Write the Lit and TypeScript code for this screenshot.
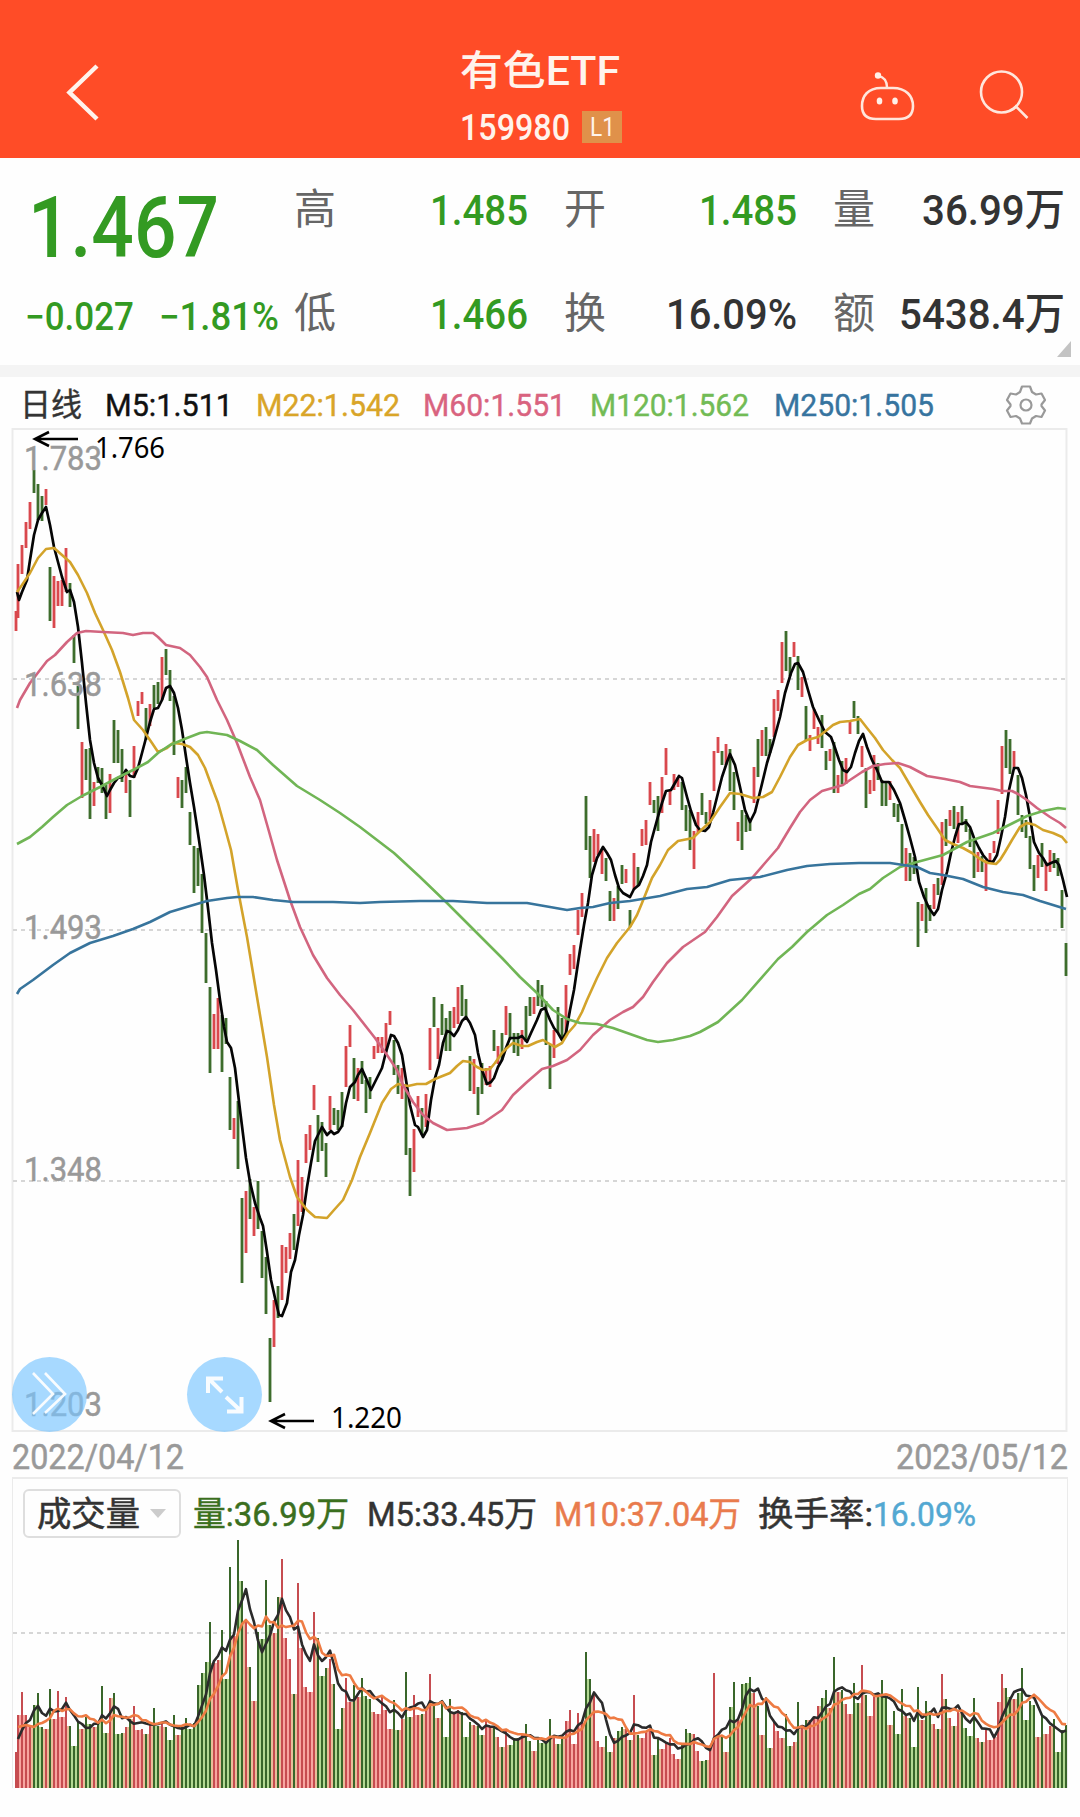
import { LitElement, html, svg, css } from 'lit';
import { customElement, property, state, query } from 'lit/decorators.js';
import { styleMap } from 'lit/directives/style-map.js';

interface Bar { x: number; up: boolean; top: number; bottom: number; vol: number }

const X0 = 18;
const STEP = 4;
const VOL_BASE = 1788;

/* Daily ranges: direction (r = up, g = down), high edge, low edge. */
const RANGES = `r564-618 r545-574 r522-548 r502-529 g470-493 g484-520 g496-521 r489-505 g567-621 r576-628
r581-606 r580-606 r548-592 g583-607 g635-663 g686-729 r742-798 g749-780 g748-819 r782-806
g767-783 g768-793 g785-819 r774-813 g720-763 g730-763 g749-782 r770-793 g780-817 r746-778
r701-716 r692-704 g708-740 r704-726 g685-708 g682-704 r657-700 g649-675 g670-701 g696-755
r777-798 g780-808 g767-793 g812-845 g846-893 g848-886 g874-933 g933-983 g987-1073 r1014-1049
r998-1049 g1015-1072 g1018-1044 g1077-1130 r1118-1139 g1101-1169 g1198-1283 r1191-1253 g1179-1219 r1207-1236
g1181-1229 g1231-1278 g1257-1314 g1338-1402 r1300-1347 g1286-1318 r1245-1300 r1247-1273 r1233-1259 g1214-1250
r1160-1226 r1177-1212 r1134-1163 r1125-1150 r1085-1110 g1115-1162 g1122-1151 g1143-1177 r1096-1130 g1108-1125
g1110-1130 g1092-1127 r1046-1087 r1025-1047 g1058-1099 r1068-1101 g1061-1084 g1080-1113 g1077-1099 r1046-1059
r1037-1053 r1037-1053 r1023-1054 r1011-1025 g1040-1075 g1065-1094 r1068-1099 g1087-1155 g1148-1196 r1129-1172
r1096-1117 g1108-1135 r1094-1127 r1028-1070 g997-1027 r1028-1059 g1004-1035 g1018-1051 g1011-1051 r1007-1028
r987-1024 g985-1016 g999-1020 g1056-1091 r1059-1094 g1087-1115 g1063-1094 r1068-1085 r1066-1087 g1030-1051
r1046-1064 g1033-1060 r1006-1035 g1013-1040 g1033-1053 g1033-1056 r1030-1049 g1006-1042 g997-1016 r997-1014
g980-1006 g985-1007 g1001-1045 g1045-1089 r1030-1058 g1007-1033 g1018-1040 r985-1033 r954-975 r945-969
r910-935 r893-917 g796-850 g836-878 r829-862 r834-855 r850-874 g858-881 g891-921 r898-921
g886-909 g865-884 r869-883 g910-927 r853-890 g867-886 r829-846 r820-845 r782-805 g800-813
g796-831 r777-813 r748-775 r790-805 r774-790 r777-787 g782-810 g805-831 g810-850 r831-869
r812-833 g793-815 g812-824 r800-821 r751-791 r737-753 g751-765 r744-765 g749-791 g772-810
r822-841 g810-850 g815-832 g819-831 r767-803 g739-777 r730-756 g727-756 g739-753 r699-737
r690-711 r642-683 g631-671 g657-676 r642-657 g656-690 r677-697 g706-741 r735-751 r709-729
r727-744 g715-748 g751-770 r749-761 g742-793 r775-793 g761-784 r758-784 r720-734 g701-718
g716-734 r746-767 g768-808 r780-794 r755-791 g763-780 g780-806 g782-806 r781-800 g803-817
g804-822 g824-864 r848-881 g853-881 g857-874 g902-947 r904-921 g888-933 g905-921 r884-909
g878-895 r822-885 g819-846 r810-826 g806-829 r812-843 g806-823 g819-832 g829-847 g840-878
r852-872 g856-872 r860-891 r853-862 r841-853 r800-834 r746-794 g730-768 g739-774 r751-768
g775-815 g815-832 g820-838 g836-869 g865-891 r855-878 g843-867 r862-891 r850-872 g853-868
g858-876 g890-928 g943-976`;

/* Top edge of each volume bar, same order as the daily ranges. */
const VOLUMES = `1715 1692 1715 1725 1705 1693 1727 1729 1689 1719 1691 1717 1697 1726 1746 1722 1729 1717 1724 1727
1722 1686 1733 1698 1693 1734 1733 1727 1719 1706 1730 1729 1734 1723 1708 1726 1723 1727 1740 1715
1735 1727 1718 1729 1723 1685 1673 1662 1622 1663 1660 1630 1679 1567 1636 1540 1581 1622 1667 1701
1632 1639 1580 1625 1633 1597 1559 1638 1659 1694 1583 1648 1687 1692 1612 1638 1676 1668 1659 1684
1729 1708 1678 1702 1685 1697 1678 1696 1699 1712 1714 1696 1710 1729 1700 1730 1719 1672 1717 1695
1715 1714 1708 1674 1706 1718 1700 1737 1699 1712 1710 1712 1737 1722 1725 1726 1735 1720 1727 1726
1737 1747 1730 1745 1738 1738 1735 1724 1741 1751 1739 1743 1741 1719 1737 1744 1738 1721 1710 1744
1713 1723 1652 1679 1695 1741 1747 1736 1752 1738 1731 1727 1729 1740 1695 1735 1738 1731 1729 1755
1737 1749 1743 1738 1754 1759 1744 1729 1733 1734 1751 1761 1760 1745 1673 1735 1735 1752 1707 1682
1720 1684 1683 1677 1693 1706 1735 1697 1748 1722 1731 1738 1714 1746 1742 1702 1726 1720 1720 1718
1706 1698 1690 1708 1657 1692 1690 1704 1714 1683 1703 1665 1695 1716 1695 1696 1680 1696 1725 1711
1734 1689 1716 1718 1747 1687 1720 1701 1711 1724 1729 1674 1699 1718 1726 1710 1713 1728 1736 1698
1738 1742 1730 1740 1737 1702 1674 1688 1697 1699 1693 1668 1720 1701 1705 1737 1715 1734 1726 1719
1752 1730 1725`.split(/\s+/).map(Number);

const BARS: Bar[] = RANGES.split(/\s+/).map((r, i) => {
  const [top, bottom] = r.slice(1).split('-').map(Number);
  return { x: X0 + i * STEP, up: r[0] === 'r', top, bottom, vol: VOLUMES[i] };
});
BARS.unshift({ x: 16, up: true, top: 611, bottom: 631, vol: 1752 });

const volumeAverage = (n: number, lead: number[]) =>
  VOLUMES.map((_, i) => {
    const y = i < lead.length ? lead[i] : VOLUMES.slice(i - n + 1, i + 1).reduce((a, b) => a + b, 0) / n;
    return `${X0 + i * STEP},${y.toFixed(1)}`;
  }).join(' ');

const VOL_M5 = volumeAverage(5, [1739, 1730, 1723, 1720]);
const VOL_M10 = volumeAverage(10, [1727, 1726, 1725, 1726, 1727, 1724, 1723, 1721, 1718]);

const M5 = `17,592 19,600 22,592 27,580 30,560 34,535 38,520 42,513 46,507 50,525 54,547 58,562 62,577 67,592 70,590 74,602 78,627 82,663 86,703 90,740 94,763 98,778 102,785 107,796 110,790 114,783 118,778 122,777 126,770 130,776 134,777 138,768 142,753 146,738 150,722 154,709 158,708 162,700 166,688 170,686 174,693 178,708 182,730 186,757 190,783 194,807 199,840 204,875 208,908 212,943 216,970 220,1000 224,1027 227,1042 231,1048 235,1068 240,1110 246,1158 250,1182 255,1203 260,1218 263,1226 267,1252 271,1280 275,1298 279,1315 282,1316 287,1303 291,1272 295,1260 299,1235 303,1215 307,1187 311,1163 315,1141 319,1133 322,1127 327,1135 331,1131 334,1134 338,1132 342,1126 346,1103 350,1087 355,1082 358,1075 362,1069 366,1078 371,1090 375,1082 382,1068 386,1052 391,1035 394,1036 398,1043 402,1055 406,1080 410,1105 415,1125 418,1127 423,1137 427,1130 431,1100 435,1078 439,1065 443,1043 447,1031 450,1032 454,1036 458,1030 462,1021 466,1017 470,1023 475,1035 478,1053 482,1070 487,1084 491,1082 494,1078 498,1067 502,1060 506,1048 510,1038 514,1038 518,1038 522,1036 527,1042 531,1033 537,1020 541,1010 545,1008 550,1020 554,1028 558,1033 562,1040 566,1033 570,1010 574,990 578,963 580,950 584,925 588,903 592,875 597,858 603,847 607,853 611,860 615,875 619,888 623,893 630,897 634,889 639,885 643,876 647,865 651,842 657,820 662,803 666,791 671,790 675,783 679,776 682,778 687,797 691,811 696,825 700,830 705,831 709,827 713,813 717,797 722,777 727,762 730,754 735,765 740,787 745,810 750,822 755,812 760,792 767,763 773,743 780,717 785,693 791,673 795,664 798,663 803,672 808,690 813,707 819,720 825,732 831,737 835,748 839,760 843,770 847,772 851,767 855,753 859,741 863,734 867,747 872,760 877,770 882,782 889,782 894,790 900,803 905,820 910,838 915,857 919,882 924,897 929,908 934,915 938,909 942,890 947,872 951,853 955,837 959,824 962,824 966,822 970,827 974,838 979,848 983,855 988,861 993,862 997,855 1001,837 1005,817 1009,790 1014,768 1018,768 1022,778 1026,795 1030,817 1034,842 1039,853 1043,858 1047,865 1051,863 1056,861 1059,865 1063,880 1067,897`;
const M22 = `17,592 22,585 30,573 38,558 46,549 54,548 62,555 70,562 78,575 87,593 95,613 103,630 112,650 120,672 128,698 134,720 143,730 152,743 158,752 167,748 173,743 182,744 190,747 198,755 205,768 212,787 218,803 225,828 231,850 238,890 247,937 257,997 267,1057 274,1105 280,1140 290,1177 297,1197 307,1210 315,1217 327,1218 334,1210 343,1200 352,1180 360,1157 370,1133 382,1103 391,1089 398,1084 408,1086 417,1084 426,1084 435,1079 440,1077 450,1073 457,1066 463,1061 470,1062 477,1067 483,1070 490,1069 495,1063 502,1053 507,1048 513,1043 522,1046 528,1046 537,1042 543,1040 548,1043 555,1047 562,1043 568,1033 575,1025 582,1012 587,1000 597,978 607,958 617,943 630,927 637,915 642,903 652,878 660,865 668,850 678,841 693,838 698,833 710,822 720,807 730,793 740,794 753,798 763,797 772,792 780,777 790,757 798,745 807,740 818,737 827,730 833,725 840,722 850,721 860,719 867,728 875,738 883,750 892,760 900,768 910,785 920,802 928,815 937,828 945,840 953,844 963,848 972,853 980,859 988,863 996,864 1000,860 1005,852 1012,840 1020,827 1027,823 1035,825 1043,830 1053,833 1062,837 1067,843`;
const M60 = `17,708 20,700 30,683 47,661 55,655 67,642 77,633 86,631 103,632 123,633 133,635 143,633 153,633 158,637 166,645 180,648 190,655 200,667 207,677 217,700 227,720 237,743 250,777 260,800 268,828 277,860 290,900 300,927 313,955 327,978 340,995 353,1010 375,1038 387,1055 397,1070 403,1085 413,1102 423,1115 433,1123 447,1130 467,1128 483,1123 502,1110 513,1095 527,1082 542,1069 553,1066 567,1060 580,1050 593,1035 610,1020 623,1012 633,1007 643,997 653,982 667,963 683,947 705,932 717,917 732,896 752,878 765,863 778,848 790,828 800,812 810,800 822,791 843,785 850,780 862,772 873,766 885,764 898,763 910,767 927,776 945,779 960,782 970,786 993,789 1002,791 1012,791 1018,794 1027,800 1037,808 1050,817 1060,823 1066,828`;
const M120 = `17,844 30,837 42,827 53,817 67,805 82,796 100,787 117,778 133,770 148,762 158,753 170,745 187,738 200,733 207,732 227,735 240,741 257,750 273,765 297,786 320,800 340,813 360,827 377,840 394,853 420,877 447,903 467,923 487,943 502,958 520,977 537,993 553,1010 567,1019 580,1023 597,1024 613,1028 630,1034 647,1040 658,1042 673,1040 690,1036 700,1032 718,1022 742,1000 771,967 778,959 792,947 807,932 827,915 843,905 859,894 870,889 883,878 900,867 917,862 943,855 967,842 993,833 1013,823 1027,816 1043,811 1058,808 1066,809`;
const M250 = `17,994 20,989 33,980 53,965 70,953 90,943 113,936 133,929 150,922 170,912 190,906 207,901 227,898 237,897 253,897 273,900 293,902 333,902 360,903 380,902 420,901 453,901 487,903 527,903 550,907 567,910 580,908 593,907 610,903 630,901 660,896 687,889 707,887 730,880 760,877 787,870 807,866 830,864 859,863 890,863 917,867 930,873 943,875 963,879 983,887 1003,892 1023,895 1040,901 1066,909`;

/** One line of text, squeezed or stretched horizontally to a given width. */
@customElement('fit-text')
class FitText extends LitElement {
  @property({ type: Number }) w = 0;
  @property() text = '';
  @state() private ratio = 1;
  @query('.line') private line!: HTMLSpanElement;

  static styles = css`
    :host { display: block; flex: none; white-space: nowrap; }
    .box { display: flex; }
    .line { display: block; flex: none; transform-origin: 0 50%; }
  `;

  firstUpdated() {
    const natural = this.line.getBoundingClientRect().width;
    if (natural > 0) this.ratio = this.w / natural;
  }

  render() {
    return html`<div class="box" style=${styleMap({ width: `${this.w}px` })}>
      <span class="line" style=${styleMap({ transform: `scaleX(${this.ratio})` })}>${this.text}</span>
    </div>`;
  }
}

@customElement('price-chart')
class PriceChart extends LitElement {
  static styles = css`
    :host { display: block; height: 1004px; }
    svg { display: block; overflow: visible; }
    .frame { fill: none; stroke: #ebebeb; stroke-width: 2; }
    .grid { stroke: #d6d6d6; stroke-width: 1.8; stroke-dasharray: 4 4; }
    .up { fill: #d9484d; }
    .down { fill: #3d6d2c; }
    .ma { fill: none; stroke-width: 2.6; stroke-linejoin: round; }
    .m5 { stroke: #050505; stroke-width: 2.7; }
    .m22 { stroke: #d3a32a; }
    .m60 { stroke: #d2657f; }
    .m120 { stroke: #70b555; }
    .m250 { stroke: #37749c; }
    .scale { font: 400 34px Roboto, sans-serif; fill: #999; stroke: #999; stroke-width: .5; }
    .mark { font: 400 29px "Noto Sans", sans-serif; fill: #000; }
    .arrow { fill: none; stroke: #000; stroke-width: 2.6; }
    .disc { fill: #7ac6ff; fill-opacity: .66; }
    .glyph { fill: none; stroke: #fff; stroke-opacity: .92; }
  `;

  render() {
    const scale: [string, number][] = [['1.783', 470], ['1.638', 696], ['1.493', 939], ['1.348', 1181], ['1.203', 1416]];
    return html`<svg width="1080" height="1004" viewBox="0 428 1080 1004">
      <rect class="frame" x="12.5" y="429" width="1054" height="1002"></rect>
      ${[679, 930, 1181].map(y => svg`<line class="grid" x1="13" x2="1066" y1=${y} y2=${y}></line>`)}
      ${BARS.map(b => svg`<rect class=${b.up ? 'up' : 'down'} x=${b.x - 1.4} y=${b.top} width="2.8" height=${b.bottom - b.top}></rect>`)}
      <polyline class="ma m5" points=${M5}></polyline>
      <polyline class="ma m22" points=${M22}></polyline>
      <polyline class="ma m60" points=${M60}></polyline>
      <polyline class="ma m120" points=${M120}></polyline>
      <polyline class="ma m250" points=${M250}></polyline>
      ${scale.map(([t, y]) => svg`<text class="scale" x="24" y=${y} textLength="78" lengthAdjust="spacingAndGlyphs">${t}</text>`)}
      <path class="arrow" d="M78 439H35M49 432L35 439L49 446"></path>
      <text class="mark" x="95" y="458" textLength="70" lengthAdjust="spacingAndGlyphs">1.766</text>
      <path class="arrow" d="M314 1421H271M285 1414L271 1421L285 1428"></path>
      <text class="mark" x="331" y="1428" textLength="71" lengthAdjust="spacingAndGlyphs">1.220</text>
      <circle class="disc" cx="49.5" cy="1394.5" r="37.5"></circle>
      <path class="glyph" stroke-width="2.6" d="M33 1373L53 1394L33 1414M45 1373L65 1394L45 1413"></path>
      <circle class="disc" cx="224.5" cy="1394.5" r="37.5"></circle>
      <path class="glyph" stroke-width="4" d="M223 1378.500H208V1393M209 1379L222 1392M227 1411.500H241.500V1397M226 1397L240.500 1410.500"></path>
    </svg>`;
  }
}

@customElement('volume-chart')
class VolumeChart extends LitElement {
  static styles = css`
    :host { display: block; height: 248px; }
    svg { display: block; }
    .grid { stroke: #d6d6d6; stroke-width: 1.8; stroke-dasharray: 4 4; }
    .up { fill: #c64c50; }
    .down { fill: #39662a; }
    .gap-up { fill: #f7a5a0; }
    .gap-down { fill: #b3d893; }
    .gap-mix { fill: #e9bd9a; }
    .ma { fill: none; stroke-width: 2.6; stroke-linejoin: round; }
    .m5 { stroke: #2b2b2b; }
    .m10 { stroke: #ee7b43; }
  `;

  render() {
    const gaps = BARS.slice(1, -1).map((b, i) => {
      const next = BARS[i + 2];
      const y = Math.max(b.vol, next.vol);
      const kind = b.up === next.up ? (b.up ? 'gap-up' : 'gap-down') : 'gap-mix';
      return svg`<rect class=${kind} x=${b.x + 1} y=${y} width="2" height=${VOL_BASE - y}></rect>`;
    });
    return html`<svg width="1054" height="248" viewBox="13 1540 1054 248">
      <line class="grid" x1="13" x2="1066" y1="1633" y2="1633"></line>
      ${gaps}
      ${BARS.map(b => svg`<rect class=${b.up ? 'up' : 'down'} x=${b.x - 1} y=${b.vol} width="2" height=${VOL_BASE - b.vol}></rect>`)}
      <polyline class="ma m5" points=${VOL_M5}></polyline>
      <polyline class="ma m10" points=${VOL_M10}></polyline>
    </svg>`;
  }
}

@customElement('app-root')
class AppRoot extends LitElement {
  static styles = css`
    :host {
      display: block; width: 1080px; height: 1817px; overflow: hidden; background: #fefefe;
      font-family: Roboto, "Noto Sans CJK SC", sans-serif; font-weight: 500; color: #333;
    }
    .header { display: grid; grid-template-columns: 460px 200px 1fr; height: 158px; background: #ff4c27; color: #fff3ec; }
    .back { padding: 62px 0 0 64px; }
    .title { padding-top: 44px; font-size: 41px; line-height: 54px; }
    .code { display: flex; align-items: center; gap: 12px; font-size: 36px; line-height: 36px; padding-top: 12px; }
    .badge { display: flex; justify-content: center; width: 40px; height: 32px; background: #e0914a; font-size: 26px; font-weight: 400; line-height: 33px; margin-top: -3px; }
    .actions { display: flex; gap: 60px; padding: 66px 0 0 198px; }
    svg { display: block; fill: none; }
    .quote { position: relative; display: grid; grid-template-columns: 234px 233px 232px; grid-template-rows: 103px 106px; column-gap: 36px; padding-left: 294px; height: 207px; font-size: 43px; line-height: 50px; }
    .cell { display: flex; align-items: center; justify-content: space-between; }
    .label { font-size: 42px; font-weight: 400; color: #666; }
    .green { color: #339a22; }
    .last { position: absolute; left: 28px; top: 24px; font-size: 86px; line-height: 92px; color: #339a22; }
    .change { position: absolute; left: 25px; top: 134px; display: flex; gap: 25px; font-size: 38px; color: #339a22; }
    .more { position: absolute; right: 9px; bottom: 8px; width: 14px; height: 16px; background: #c3c3c3; clip-path: polygon(100% 0, 100% 100%, 0 100%); }
    .split { height: 12px; background: #f4f4f4; }
    .averages { display: flex; align-items: center; height: 47px; padding: 4px 33px 0 20px; font-size: 32px; line-height: 40px; font-weight: 400; -webkit-text-stroke: .4px currentColor; }
    .averages .gear { margin-left: auto; }
    .t5 { margin-left: 23px; color: #111; }
    .t22 { margin-left: 23px; color: #d9a528; }
    .t60 { margin-left: 23px; color: #d9637f; }
    .t120 { margin-left: 24px; color: #72bb55; }
    .t250 { margin-left: 25px; color: #37749f; }
    .dates { display: flex; justify-content: space-between; align-items: center; height: 45px; padding: 5px 12px 0; box-sizing: border-box; font-size: 35px; font-weight: 400; -webkit-text-stroke: .5px currentColor; color: #999; }
    .volume { margin: 0 12px; border: 1px solid #ebebeb; border-top-width: 2px; border-bottom: 0; height: 311px; box-sizing: border-box; }
    .legend { display: flex; align-items: center; height: 61px; padding-left: 10px; font-size: 34px; line-height: 40px; font-weight: 400; -webkit-text-stroke: .5px currentColor; }
    .select { display: flex; align-items: center; justify-content: space-between; width: 158px; height: 49px; margin-top: 8px; padding: 0 13px 0 12px; box-sizing: border-box; border: 2px solid #dedede; border-radius: 6px; }
    .caret { border: 8px solid transparent; border-top: 9px solid #ccc; border-bottom: 0; }
    .legend fit-text.item { margin-top: 8px; }
    .vol { margin-left: 12px; color: #3b6f1e; }
    .v5 { margin-left: 18px; }
    .v10 { margin-left: 17px; color: #e97b4d; }
    .turn { margin-left: 17px; }
    .rate { margin-left: 0; color: #53a8d2; }
  `;

  private cell(label: string, text: string, w: number, tone = '') {
    return html`<div class="cell"><span class="label">${label}</span><fit-text class=${tone} w=${w} text=${text}></fit-text></div>`;
  }

  render() {
    return html`
      <div class="header">
        <div class="back">
          <svg width="38" height="60" viewBox="64 62 38 60"><path d="M97 66L69.500 92.500L97 119" stroke="#fff3ec" stroke-width="4.500"></path></svg>
        </div>
        <div>
          <div class="title"><fit-text w="160" text="有色ETF"></fit-text></div>
          <div class="code"><fit-text w="110" text="159980"></fit-text><span class="badge"><fit-text w="25" text="L1"></fit-text></span></div>
        </div>
        <div class="actions">
          <svg width="60" height="60" viewBox="858 66 60 60" stroke="#ffe6dc" stroke-width="2.600">
            <path d="M881 88H893C906 88 913 96 913 106C913 115 908 119 899 119H876C867 119 862 115 862 106C862 96 868 88 881 88Z"></path>
            <path d="M887 88C887 80 884 77 878 76"></path>
            <g fill="#fff0e8" stroke="none"><circle cx="878" cy="75.500" r="3.200"></circle><ellipse cx="879.500" cy="101" rx="2.800" ry="3.600"></ellipse><ellipse cx="895" cy="101" rx="2.800" ry="3.600"></ellipse></g>
          </svg>
          <svg width="60" height="60" viewBox="978 66 60 60" stroke="#ffe6dc" stroke-width="2.600">
            <circle cx="1001.500" cy="92" r="20.500"></circle><path d="M1010 110.500C1013 109.500 1014 109 1016 106.500L1027.500 118"></path>
          </svg>
        </div>
      </div>
      <div class="quote">
        ${this.cell('高', '1.485', 98, 'green')}
        ${this.cell('开', '1.485', 98, 'green')}
        ${this.cell('量', '36.99万', 143)}
        ${this.cell('低', '1.466', 98, 'green')}
        ${this.cell('换', '16.09%', 131)}
        ${this.cell('额', '5438.4万', 166)}
        <fit-text class="last" w="191" text="1.467"></fit-text>
        <div class="change"><fit-text w="109" text="−0.027"></fit-text><fit-text w="120" text="−1.81%"></fit-text></div>
        <div class="more"></div>
      </div>
      <div class="split"></div>
      <div class="averages">
        <fit-text w="62" text="日线"></fit-text>
        <fit-text class="t5" w="128" text="M5:1.511"></fit-text>
        <fit-text class="t22" w="144" text="M22:1.542"></fit-text>
        <fit-text class="t60" w="143" text="M60:1.551"></fit-text>
        <fit-text class="t120" w="159" text="M120:1.562"></fit-text>
        <fit-text class="t250" w="160" text="M250:1.505"></fit-text>
        <svg class="gear" width="42" height="42" viewBox="0 0 42 42" stroke="#999" stroke-width="2.200" stroke-linejoin="round">
          <path d="M17 2.500H25L27 8L31 10.500L36.500 9.500L40 16L36.500 20.500V22L40 26.500L36.500 33L31 32L27 34.500L25 39.500H17L15 34.500L11 32L5.500 33L2 26.500L5.500 22V20.500L2 16L5.500 9.500L11 10.500L15 8Z"></path>
          <circle cx="21" cy="21" r="5.500"></circle>
        </svg>
      </div>
      <price-chart></price-chart>
      <div class="dates"><fit-text w="172" text="2022/04/12"></fit-text><fit-text w="172" text="2023/05/12"></fit-text></div>
      <div class="volume">
        <div class="legend">
          <div class="select"><fit-text w="103" text="成交量"></fit-text><span class="caret"></span></div>
          <fit-text class="item vol" w="156" text="量:36.99万"></fit-text>
          <fit-text class="item v5" w="170" text="M5:33.45万"></fit-text>
          <fit-text class="item v10" w="187" text="M10:37.04万"></fit-text>
          <fit-text class="item turn" w="115" text="换手率:"></fit-text>
          <fit-text class="item rate" w="103" text="16.09%"></fit-text>
        </div>
        <volume-chart></volume-chart>
      </div>`;
  }
}
